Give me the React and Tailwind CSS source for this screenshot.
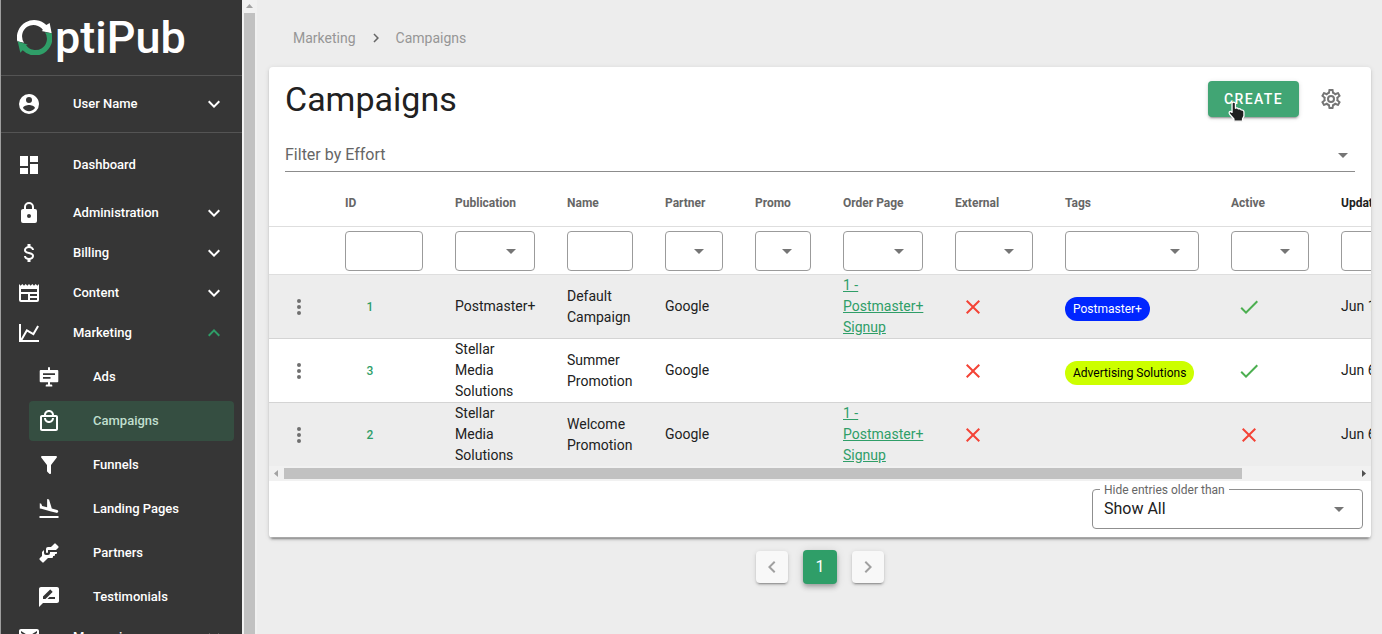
import React from "react";

const paths = {
  account:
    "M12,19.2C9.5,19.2 7.29,17.92 6,16C6.03,14 10,12.9 12,12.9C14,12.9 17.97,14 18,16C16.71,17.92 14.5,19.2 12,19.2M12,5A3,3 0 0,1 15,8A3,3 0 0,1 12,11A3,3 0 0,1 9,8A3,3 0 0,1 12,5M12,2A10,10 0 0,0 2,12A10,10 0 0,0 12,22A10,10 0 0,0 22,12C22,6.47 17.5,2 12,2Z",
  dashboard: "M13,3V9H21V3M13,21H21V11H13M3,21H11V15H3M3,13H11V3H3V13Z",
  lock: "M12,17A2,2 0 0,0 14,15C14,13.89 13.1,13 12,13A2,2 0 0,0 10,15A2,2 0 0,0 12,17M18,8A2,2 0 0,1 20,10V20A2,2 0 0,1 18,22H6A2,2 0 0,1 4,20V10C4,8.89 4.9,8 6,8H7V6A5,5 0 0,1 12,1A5,5 0 0,1 17,6V8H18M12,3A3,3 0 0,0 9,6V8H15V6A3,3 0 0,0 12,3Z",
  dollar:
    "M7,15H9C9,16.08 10.37,17 12,17C13.63,17 15,16.08 15,15C15,13.9 13.96,13.5 11.76,12.97C9.64,12.44 7,11.78 7,9C7,7.21 8.47,5.69 10.5,5.18V3H13.5V5.18C15.53,5.69 17,7.21 17,9H15C15,7.92 13.63,7 12,7C10.37,7 9,7.92 9,9C9,10.1 10.04,10.5 12.24,11.03C14.36,11.56 17,12.22 17,15C17,16.79 15.53,18.31 13.5,18.82V21H10.5V18.82C8.47,18.31 7,16.79 7,15Z",
  newspaper:
    "M20,11H4V8H20M20,15H13V13H20M20,19H13V17H20M11,19H4V13H11M20.33,4.67L18.67,3L17,4.67L15.33,3L13.67,4.67L12,3L10.33,4.67L8.67,3L7,4.67L5.33,3L3.67,4.67L2,3V19A2,2 0 0,0 4,21H20A2,2 0 0,0 22,19V3L20.33,4.67Z",
  chart: "M16,11.78L20.24,4.45L21.97,5.45L16.74,14.5L10.23,10.75L5.46,19H22V21H2V3H4V17.54L9.5,8L16,11.78Z",
  sign: "M11,3A1,1 0 0,1 13,3V5H20.3A1,1 0 0,1 21.3,6V16.2A1,1 0 0,1 20.3,17.2H13V19.6H14.3A1,1 0 0,1 15.3,20.6V21.6H8.7V20.6A1,1 0 0,1 9.7,19.6H11V17.2H3.7A1,1 0 0,1 2.7,16.2V6A1,1 0 0,1 3.7,5H11V3M6,8.2V10H18V8.2H6M6,12V13.8H13.5V12H6Z",
  shopping:
    "M19 6H17C17 3.2 14.8 1 12 1S7 3.2 7 6H5C3.9 6 3 6.9 3 8V20C3 21.1 3.9 22 5 22H19C20.1 22 21 21.1 21 20V8C21 6.9 20.1 6 19 6M12 3C13.7 3 15 4.3 15 6H9C9 4.3 10.3 3 12 3M19 20H5V8H19V20M12 12C10.3 12 9 10.7 9 9H7C7 11.8 9.2 14 12 14S17 11.8 17 9H15C15 10.7 13.7 12 12 12Z",
  filter:
    "M14,12V19.88C14.04,20.18 13.94,20.5 13.71,20.71C13.32,21.1 12.69,21.1 12.3,20.71L10.29,18.7C10.06,18.47 9.96,18.16 10,17.87V12H9.97L4.21,4.62C3.87,4.19 3.95,3.56 4.38,3.22C4.57,3.08 4.78,3 5,3V3H19V3C19.22,3 19.43,3.08 19.62,3.22C20.05,3.56 20.13,4.19 19.79,4.62L14.03,12H14Z",
  landing:
    "M2.5,19H21.5V21H2.5V19M9.68,13.27L14.03,14.43L19.34,15.85C20.14,16.06 20.96,15.59 21.18,14.79C21.39,14 20.92,13.17 20.12,12.95L14.81,11.53L12.05,2.5L10.12,2V10.28L5.15,8.95L4.22,6.63L2.77,6.24V11.41L4.37,11.84L9.68,13.27Z",
  handshake:
    "M11 6H14L17.29 2.7A1 1 0 0 1 18.71 2.7L21.29 5.29A1 1 0 0 1 21.29 6.7L19 9H11V11A1 1 0 0 1 10 12A1 1 0 0 1 9 11V8A2 2 0 0 1 11 6M5 11V15L2.71 17.29A1 1 0 0 0 2.71 18.7L5.29 21.29A1 1 0 0 0 6.71 21.29L11 17H15A1 1 0 0 0 16 16V15H17A1 1 0 0 0 18 14V13H19A1 1 0 0 0 20 12V11H13V12A2 2 0 0 1 11 14H9A2 2 0 0 1 7 12V9Z",
  review:
    "M20 2H4c-1.1 0-1.99.9-1.99 2L2 22l4-4h14c1.1 0 2-.9 2-2V4c0-1.1-.9-2-2-2zM6 14v-2.47l6.88-6.88c.2-.2.51-.2.71 0l1.77 1.77c.2.2.2.51 0 .71L8.47 14H6zm12 0h-7.5l2-2H18v2z",
  email: "M20,8L12,13L4,8V6L12,11L20,6M20,4H4C2.89,4 2,4.89 2,6V18A2,2 0 0,0 4,20H20A2,2 0 0,0 22,18V6C22,4.89 21.1,4 20,4Z",
  cog: "M12,8A4,4 0 0,1 16,12A4,4 0 0,1 12,16A4,4 0 0,1 8,12A4,4 0 0,1 12,8M12,10A2,2 0 0,0 10,12A2,2 0 0,0 12,14A2,2 0 0,0 14,12A2,2 0 0,0 12,10M10,22C9.75,22 9.54,21.82 9.5,21.58L9.13,18.93C8.5,18.68 7.96,18.34 7.44,17.94L4.95,18.95C4.73,19.03 4.46,18.95 4.34,18.73L2.34,15.27C2.21,15.05 2.27,14.78 2.46,14.63L4.57,12.97L4.5,12L4.57,11L2.46,9.37C2.27,9.22 2.21,8.95 2.34,8.73L4.34,5.27C4.46,5.05 4.73,4.96 4.95,5.05L7.44,6.05C7.96,5.66 8.5,5.32 9.13,5.07L9.5,2.42C9.54,2.18 9.75,2 10,2H14C14.25,2 14.46,2.18 14.5,2.42L14.87,5.07C15.5,5.32 16.04,5.66 16.56,6.05L19.05,5.05C19.27,4.96 19.54,5.05 19.66,5.27L21.66,8.73C21.79,8.95 21.73,9.22 21.54,9.37L19.43,11L19.5,12L19.43,13L21.54,14.63C21.73,14.78 21.79,15.05 21.66,15.27L19.66,18.73C19.54,18.95 19.27,19.04 19.05,18.95L16.56,17.95C16.04,18.34 15.5,18.68 14.87,18.93L14.5,21.58C14.46,21.82 14.25,22 14,22H10M11.25,4L10.88,6.61C9.68,6.86 8.62,7.5 7.85,8.39L5.44,7.35L4.69,8.65L6.8,10.2C6.4,11.37 6.4,12.64 6.8,13.8L4.68,15.36L5.43,16.66L7.86,15.62C8.63,16.5 9.68,17.14 10.87,17.38L11.24,20H12.76L13.13,17.39C14.32,17.14 15.37,16.5 16.14,15.62L18.57,16.66L19.32,15.36L17.2,13.81C17.6,12.64 17.6,11.37 17.2,10.2L19.31,8.65L18.56,7.35L16.15,8.39C15.38,7.5 14.32,6.86 13.12,6.62L12.75,4H11.25Z",
  down: "M7.41,8.58L12,13.17L16.59,8.58L18,10L12,16L6,10L7.41,8.58Z",
  up: "M7.41,15.41L12,10.83L16.59,15.41L18,14L12,8L6,14L7.41,15.41Z",
  left: "M15.41,16.58L10.83,12L15.41,7.41L14,6L8,12L14,18L15.41,16.58Z",
  right: "M8.59,16.58L13.17,12L8.59,7.41L10,6L16,12L10,18L8.59,16.58Z",
  caret: "M7,10L12,15L17,10H7Z",
  close: "M19,6.41L17.59,5L12,10.59L6.41,5L5,6.41L10.59,12L5,17.59L6.41,19L12,13.41L17.59,19L19,17.59L13.41,12L19,6.41Z",
  check: "M21,7L9,19L3.5,13.5L4.91,12.09L9,16.17L19.59,5.59L21,7Z",
  dots: "M12,16A2,2 0 0,1 14,18A2,2 0 0,1 12,20A2,2 0 0,1 10,18A2,2 0 0,1 12,16M12,10A2,2 0 0,1 14,12A2,2 0 0,1 12,14A2,2 0 0,1 10,12A2,2 0 0,1 12,10M12,4A2,2 0 0,1 14,6A2,2 0 0,1 12,8A2,2 0 0,1 10,6A2,2 0 0,1 12,4Z",
};

function Icon({ name, className = "size-6" }) {
  return (
    <svg viewBox="0 0 24 24" fill="currentColor" aria-hidden="true" className={`block shrink-0 ${className}`}>
      <path d={paths[name]} />
    </svg>
  );
}

function Logo() {
  return (
    <a href="#home" aria-label="OptiPub" className="flex h-[75px] shrink-0 items-center pl-4 text-white">
      <svg viewBox="0 0 105 105" className="size-[35px] shrink-0" aria-hidden="true">
        <path
          fill="#ffffff"
          d="M1 64A52 52 0 0 1 88 15L98 9L104 40L74 33L78 30A33 33 0 0 0 21 68Z"
        />
        <path
          fill="#2f9e68"
          d="M104 40A52 52 0 0 1 17 91L10 98L2 64L33 74L27 75A33 33 0 0 0 84 37Z"
        />
      </svg>
      <span className="pl-[3px] text-[45px] leading-[45px] font-medium">ptiPub</span>
    </a>
  );
}

function NavRow({ icon, label, chevron, open }) {
  return (
    <button type="button" aria-expanded={chevron ? !!open : undefined} className="flex h-10 w-full shrink-0 items-center px-4 text-left">
      <Icon name={icon} />
      <span className="flex-1 pl-8">{label}</span>
      {chevron && <Icon name={open ? "up" : "down"} className={open ? "size-6 text-[#2f9e68]" : "size-6"} />}
    </button>
  );
}

const groups = [
  { icon: "lock", label: "Administration" },
  { icon: "dollar", label: "Billing" },
  { icon: "newspaper", label: "Content" },
  { icon: "chart", label: "Marketing", open: true },
];

const subItems = [
  { icon: "sign", label: "Ads" },
  { icon: "shopping", label: "Campaigns", active: true },
  { icon: "filter", label: "Funnels" },
  { icon: "landing", label: "Landing Pages" },
  { icon: "handshake", label: "Partners" },
  { icon: "review", label: "Testimonials" },
];

function Sidebar() {
  return (
    <aside className="flex w-[257px] shrink-0 overflow-hidden border-l border-[#9e9e9e] bg-[#363636]">
      <div className="flex min-w-0 flex-1 flex-col overflow-hidden text-[13px] font-medium text-white">
        <Logo />
        <div className="flex h-[58px] shrink-0 flex-col justify-center border-y border-[#545454]">
          <NavRow icon="account" label="User Name" chevron />
        </div>
        <nav className="flex flex-col pt-3">
          <NavRow icon="dashboard" label="Dashboard" />
          <div className="h-2 shrink-0" />
          {groups.map((g) => (
            <NavRow key={g.label} icon={g.icon} label={g.label} chevron open={g.open} />
          ))}
          <ul className="flex flex-col gap-1 pt-1 pr-2 pl-7">
            {subItems.map((s) => (
              <li key={s.label}>
                <a
                  href={`#${s.label}`}
                  aria-current={s.active ? "page" : undefined}
                  className={
                    s.active
                      ? "flex h-10 items-center rounded bg-[#354e41] px-2"
                      : "flex h-10 items-center rounded px-2"
                  }
                >
                  <Icon name={s.icon} />
                  <span className={s.active ? "pl-8 text-[#c0dfce]" : "pl-8"}>{s.label}</span>
                </a>
              </li>
            ))}
          </ul>
          <NavRow icon="email" label="Messaging" chevron />
        </nav>
      </div>
      <div className="flex w-[15px] flex-col items-center bg-[#f1f1f1]" aria-hidden="true">
        <svg viewBox="0 0 15 13" className="h-[13px] w-[15px] shrink-0">
          <path d="M4 8L7.5 4L11 8Z" fill="#a3a3a3" />
        </svg>
        <div className="w-[11px] flex-1 bg-[#c1c1c1]" />
      </div>
    </aside>
  );
}

function SelectBox({ label }) {
  return (
    <div className="relative">
      <select aria-label={label} className="block h-10 w-full appearance-none rounded border border-[#9b9b9b] bg-white pr-9 pl-3 text-sm">
        <option></option>
      </select>
      <Icon name="caret" className="pointer-events-none absolute top-2 right-3 size-6 text-[#757575]" />
    </div>
  );
}

const columns = [
  { key: "id", label: "ID", width: "w-[110px]", filter: "input" },
  { key: "publication", label: "Publication", width: "w-[112px]", filter: "select" },
  { key: "name", label: "Name", width: "w-[98px]", filter: "input" },
  { key: "partner", label: "Partner", width: "w-[90px]", filter: "select" },
  { key: "promo", label: "Promo", width: "w-[88px]", filter: "select" },
  { key: "order", label: "Order Page", width: "w-[112px]", filter: "select" },
  { key: "external", label: "External", width: "w-[110px]", filter: "select" },
  { key: "tags", label: "Tags", width: "w-[166px]", filter: "select" },
  { key: "active", label: "Active", width: "w-[110px]", filter: "select" },
  { key: "updated", label: "Updated", width: "w-[177px]", filter: "input", sorted: true },
];

const rows = [
  { id: 1, publication: "Postmaster+", name: "Default Campaign", partner: "Google", order: "1 - Postmaster+ Signup", external: false, tag: "Postmaster+", tagClass: "bg-[#0026ff] text-white", active: true, updated: "Jun 13" },
  { id: 3, publication: "Stellar Media Solutions", name: "Summer Promotion", partner: "Google", external: false, tag: "Advertising Solutions", tagClass: "bg-[#ccff00] text-black", active: true, updated: "Jun 6" },
  { id: 2, publication: "Stellar Media Solutions", name: "Welcome Promotion", partner: "Google", order: "1 - Postmaster+ Signup", external: false, active: false, updated: "Jun 6" },
];

function Flag({ on }) {
  return (
    <span role="img" aria-label={on ? "Yes" : "No"} className="flex w-9 justify-center">
      <Icon name={on ? "check" : "close"} className={on ? "size-6 text-[#4caf50]" : "size-6 text-[#f44336]"} />
    </span>
  );
}

function CampaignTable() {
  return (
    <div className="overflow-hidden">
      <table className="w-full min-w-[1233px] table-fixed border-separate border-spacing-0 text-left text-sm leading-[21px] text-[#212121]">
        <thead>
          <tr className="h-12 text-xs text-[#666666]">
            <th aria-label="Row menu" className="w-[60px] border-b border-[#dedede]" />
            {columns.map((c) => (
              <th
                key={c.key}
                className={
                  c.sorted
                    ? `${c.width} border-b border-[#dedede] px-4 font-bold text-[#212121]`
                    : `${c.width} border-b border-[#dedede] px-4 font-bold`
                }
              >
                {c.label}
              </th>
            ))}
          </tr>
          <tr className="h-12">
            <td className="border-b border-[#dedede]" />
            {columns.map((c) => (
              <td key={c.key} className="border-b border-[#dedede] px-4">
                {c.filter === "select" ? (
                  <SelectBox label={`Filter by ${c.label}`} />
                ) : (
                  <input
                    type="text"
                    aria-label={`Filter by ${c.label}`}
                    className="block h-10 w-full rounded border border-[#9b9b9b] bg-white px-3"
                  />
                )}
              </td>
            ))}
          </tr>
        </thead>
        <tbody>
          {rows.map((r) => (
            <tr key={r.id} className="odd:bg-[#ededed] [&>td]:border-[#d4d4d4] [&:not(:last-child)>td]:border-b">
              <td className="pl-4">
                <button type="button" aria-label={`Actions for ${r.name}`} className="flex w-7 justify-center text-[#6f6f6f]">
                  <Icon name="dots" />
                </button>
              </td>
              <td className="px-4">
                <a href={`#campaign-${r.id}`} className="flex w-[50px] justify-center text-xs font-medium text-[#2f9e68]">
                  {r.id}
                </a>
              </td>
              <td className="h-[63px] px-4">{r.publication}</td>
              <td className="px-4">{r.name}</td>
              <td className="px-4">{r.partner}</td>
              <td className="px-4" />
              <td className="px-4">
                {r.order && (
                  <a href="#order-page" className="text-[#2f9e68] underline">
                    {r.order}
                  </a>
                )}
              </td>
              <td className="px-4">
                <Flag on={r.external} />
              </td>
              <td className="px-4 pt-1">
                {r.tag && (
                  <span className={`inline-flex h-6 items-center rounded-full px-2 text-xs whitespace-nowrap ${r.tagClass}`}>{r.tag}</span>
                )}
              </td>
              <td className="px-4">
                <Flag on={r.active} />
              </td>
              <td className="px-4 whitespace-nowrap">{r.updated}</td>
            </tr>
          ))}
        </tbody>
      </table>
    </div>
  );
}

function HandCursor() {
  return (
    <svg viewBox="0 0 17 18" aria-hidden="true" className="pointer-events-none absolute top-5 left-5 h-[21px] w-5">
      <path
        d="M3.4 2.2C3.4 0.6 6.2 0.6 6.3 2.2V6.2C7.2 5.8 8.3 6 8.8 6.8C9.8 6.4 10.8 6.8 11.1 7.6C12.2 7.4 13.4 8 13.6 9.2V13L12.4 15.2V17.3H5V15.4L1.4 11.4C0.4 10.2 1 8.8 2.2 9L3.4 9.8Z"
        fill="#1f1f1f"
        stroke="#ffffff"
        strokeWidth="1.1"
        strokeLinejoin="round"
      />
    </svg>
  );
}

export default function App() {
  return (
    <div className="flex h-screen overflow-hidden bg-[#ededed] text-[#212121] [font-family:Roboto,sans-serif]">
      <Sidebar />
      <main className="flex min-w-0 flex-1 flex-col pr-[11px] pl-3">
        <nav aria-label="Breadcrumb" className="flex shrink-0 items-center gap-[11px] px-6 pt-7 pb-[19px] text-sm text-[#969696]">
          <a href="#marketing">Marketing</a>
          <Icon name="right" className="size-[18px] text-[#666666]" />
          <a href="#campaigns">Campaigns</a>
        </nav>

        <section className="shrink-0 overflow-hidden rounded bg-white shadow-[0_3px_1px_-2px_rgba(0,0,0,0.2),0_2px_2px_0_rgba(0,0,0,0.14),0_1px_5px_0_rgba(0,0,0,0.12)]">
          <header className="flex h-16 items-center pr-6 pl-4">
            <h1 className="flex-1 text-[34px] leading-10">Campaigns</h1>
            <div className="relative">
              <button
                type="button"
                className="h-9 rounded bg-[#41a574] px-4 text-sm font-medium tracking-widest text-white shadow-[0_3px_1px_-2px_rgba(0,0,0,0.2),0_2px_2px_0_rgba(0,0,0,0.14),0_1px_5px_0_rgba(0,0,0,0.12)]"
              >
                CREATE
              </button>
              <HandCursor />
            </div>
            <button type="button" aria-label="Table settings" className="ml-4 px-1 text-[#757575]">
              <Icon name="cog" />
            </button>
          </header>

          <div className="px-4 pt-2 pb-[7px]">
            <div className="relative border-b border-[#8c8c8c]">
              <select aria-label="Filter by Effort" className="block h-8 w-full appearance-none bg-transparent pr-8 text-base text-[#666666]">
                <option>Filter by Effort</option>
              </select>
              <Icon name="caret" className="pointer-events-none absolute top-1 right-0 size-6 text-[#757575]" />
            </div>
          </div>

          <CampaignTable />

          <div className="flex h-[15px] items-center bg-[#f1f1f1]" aria-hidden="true">
            <svg viewBox="0 0 15 15" className="size-[15px] shrink-0">
              <path d="M9 4L5 7.5L9 11Z" fill="#a3a3a3" />
            </svg>
            <div className="h-[11px] flex-1">
              <div className="h-full w-[89.4%] bg-[#c1c1c1]" />
            </div>
            <svg viewBox="0 0 15 15" className="size-[15px] shrink-0">
              <path d="M6 4L10 7.5L6 11Z" fill="#505050" />
            </svg>
          </div>

          <footer className="flex justify-end border-b border-[#a8a8a8] p-2">
            <div className="relative w-[271px]">
              <label htmlFor="age" className="absolute -top-2 left-2 bg-white px-1 text-xs leading-[18px] text-[#666666]">
                Hide entries older than
              </label>
              <select id="age" className="block h-10 w-full appearance-none rounded border border-[#8f8f8f] bg-transparent pr-9 pl-[11px] text-base">
                <option>Show All</option>
              </select>
              <Icon name="caret" className="pointer-events-none absolute top-2 right-3 size-6 text-[#757575]" />
            </div>
          </footer>
        </section>

        <nav aria-label="Pagination" className="flex items-center justify-center gap-[15px] pt-3">
          <button type="button" aria-label="Previous page" className="flex size-8 items-center justify-center rounded bg-[#f8f8f8] text-[#a0a0a0] shadow-[0_3px_1px_-2px_rgba(0,0,0,0.2),0_2px_2px_0_rgba(0,0,0,0.14),0_1px_5px_0_rgba(0,0,0,0.12)]">
            <Icon name="left" />
          </button>
          <button type="button" aria-current="page" className="size-[34px] rounded bg-[#2f9e68] text-base text-white shadow-[0_2px_4px_-1px_rgba(0,0,0,0.2),0_4px_5px_0_rgba(0,0,0,0.14),0_1px_10px_0_rgba(0,0,0,0.12)]">
            1
          </button>
          <button type="button" aria-label="Next page" className="flex size-8 items-center justify-center rounded bg-[#f8f8f8] text-[#a0a0a0] shadow-[0_3px_1px_-2px_rgba(0,0,0,0.2),0_2px_2px_0_rgba(0,0,0,0.14),0_1px_5px_0_rgba(0,0,0,0.12)]">
            <Icon name="right" />
          </button>
        </nav>
      </main>
    </div>
  );
}
